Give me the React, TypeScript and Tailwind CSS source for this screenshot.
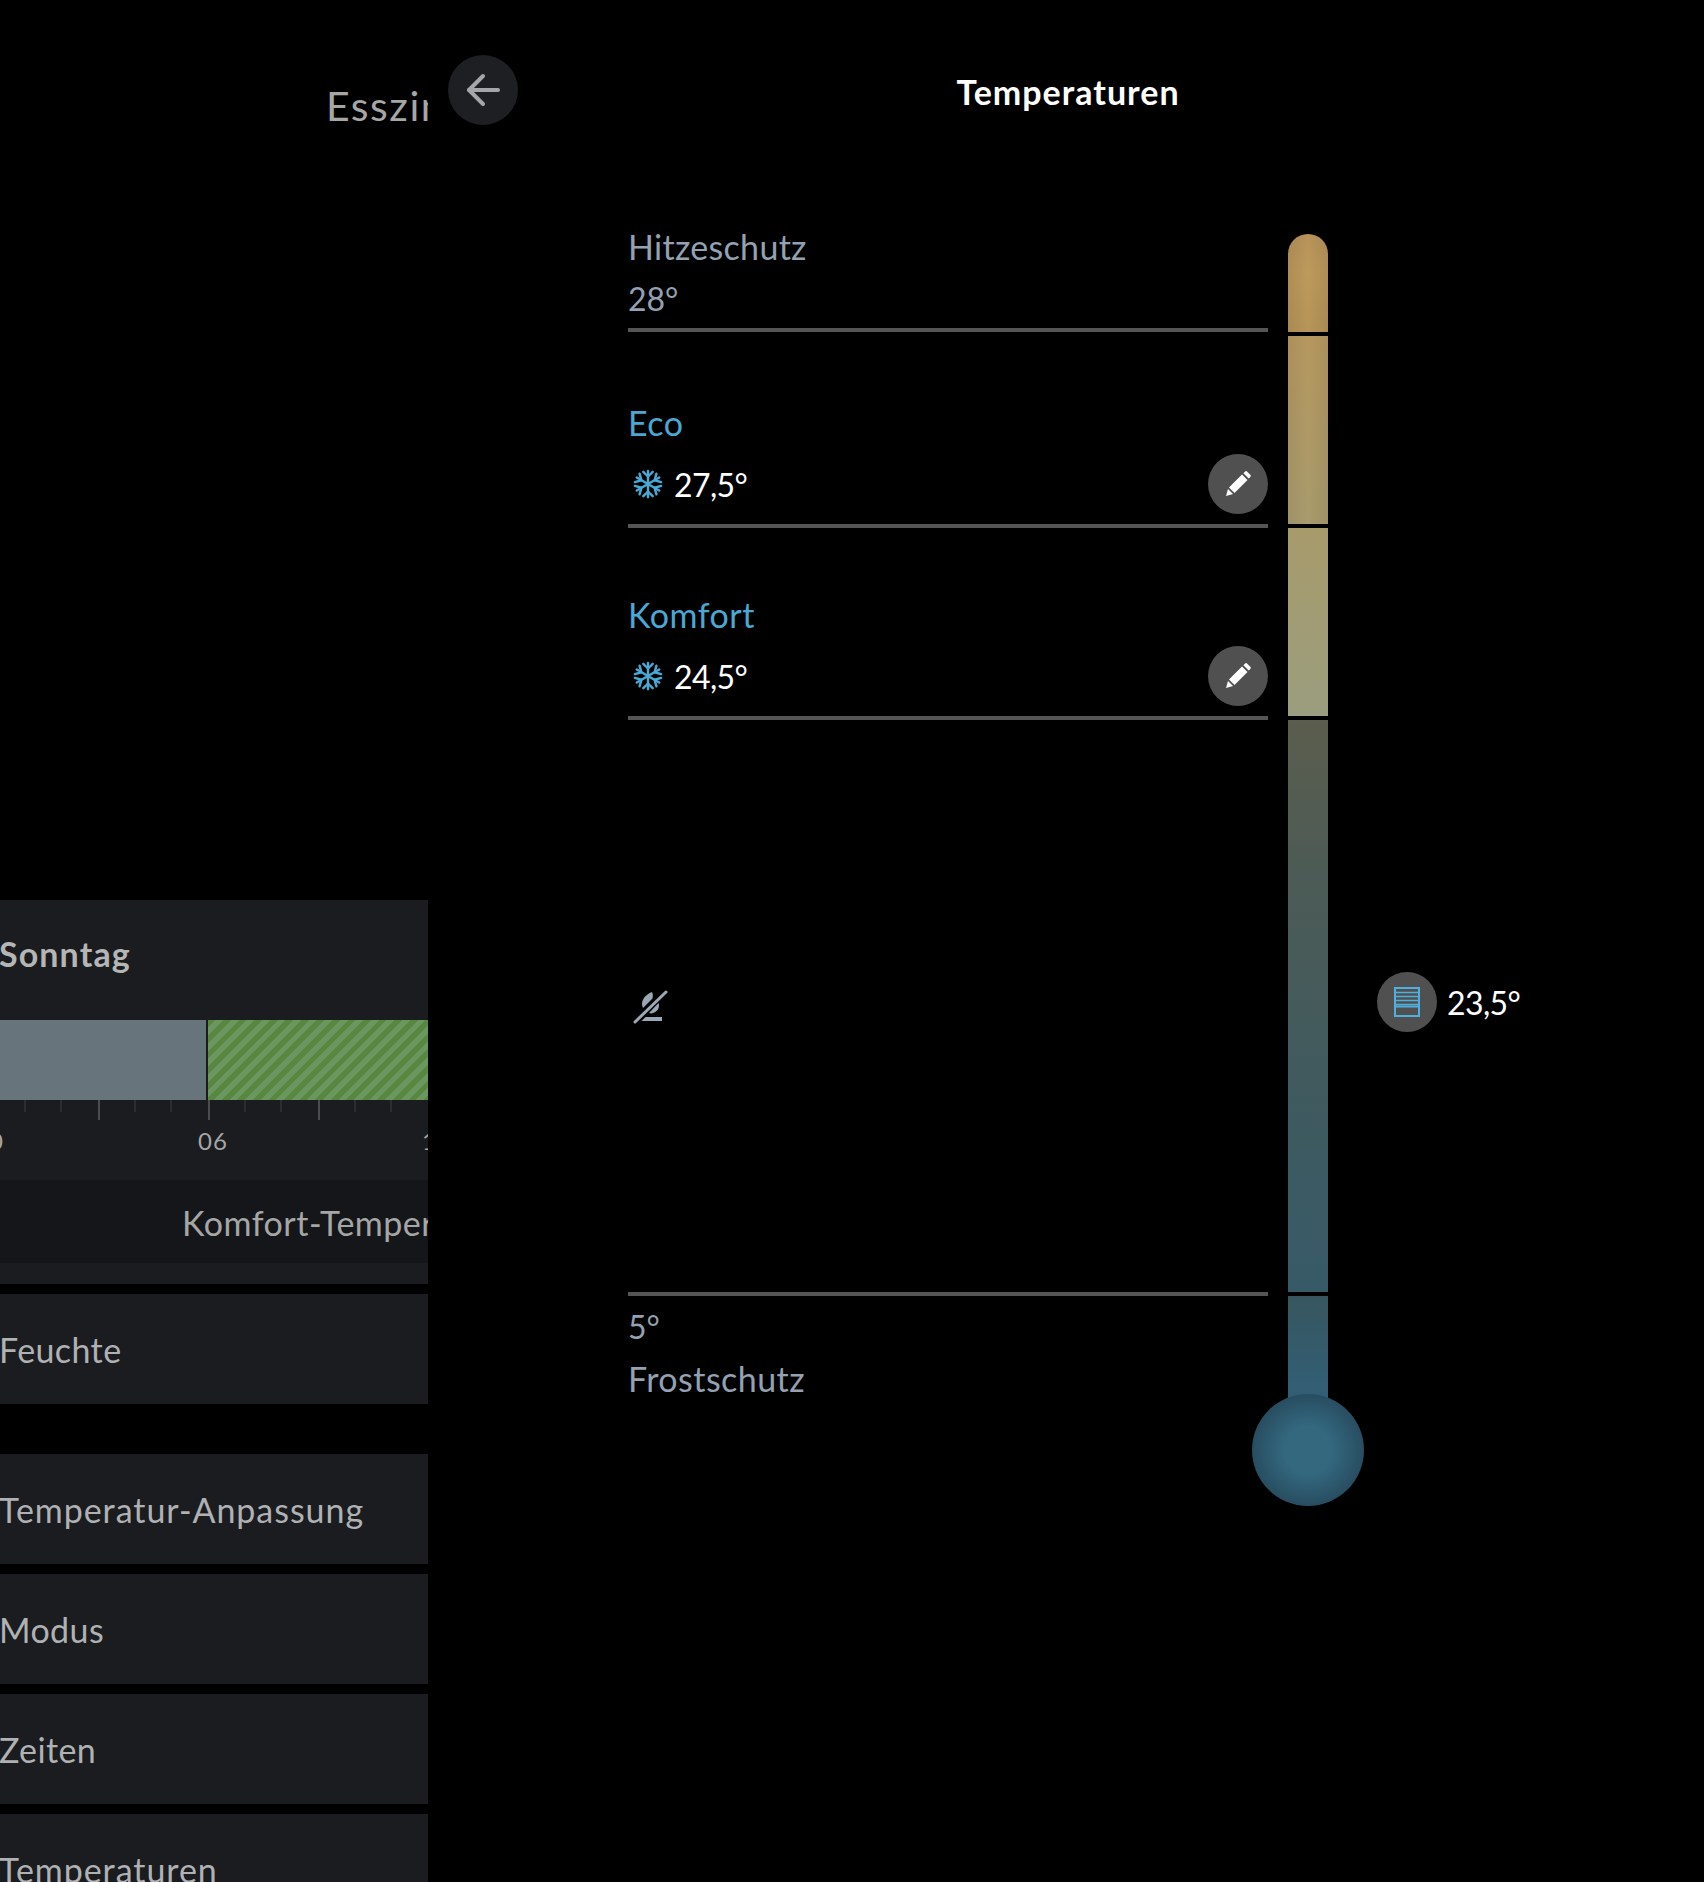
import React from 'react';

const ticks = [25, 61, 99, 135, 171, 209, 245, 281, 319, 355, 391];
const bigTicks = [99, 209, 319];

function BackArrow() {
  return (
    <svg width="34" height="34" viewBox="0 0 34 34" fill="none" stroke="#a5a6aa" strokeWidth="4" strokeLinecap="round" strokeLinejoin="round">
      <path d="M32 17H3" />
      <path d="M17 3 3 17l14 14" />
    </svg>
  );
}

function Snowflake() {
  return (
    <svg width="30" height="30" viewBox="0 0 32 32" fill="none" stroke="#4aa8d4" strokeWidth="2.600" strokeLinecap="round" strokeLinejoin="round">
      <path d="M16 2v28M4 9l24 14M28 9 4 23" />
      <path d="M11 3l5 5 5-5M11 29l5-5 5 5" />
      <path d="M2 14l7-2-2-7M30 18l-7 2 2 7M30 14l-7-2 2-7M2 18l7 2-2 7" />
    </svg>
  );
}

function Pencil() {
  return (
    <svg width="28" height="28" viewBox="0 0 28 28" fill="#fff">
      <path d="M2 26l2-7 5 5z" />
      <path d="M5 17.500 18 4.500l5.500 5.500-13 13z" />
      <path d="M19.400 3.200l1.500-1.500c.8-.8 1.600-.8 2.300 0l3.100 3.100c.7.7.7 1.500 0 2.300l-1.500 1.500z" />
    </svg>
  );
}

function EditButton() {
  return (
    <div className="w-[60px] h-[60px] rounded-full bg-[#505050] flex items-center justify-center">
      <Pencil />
    </div>
  );
}

function NoLeaf() {
  return (
    <svg width="36" height="36" viewBox="0 0 36 36" fill="#9aa7b5">
      <path d="M20 2c1 2 1 4 .5 6.500L11 18C8 12 12 5 20 2z" />
      <path d="M26.500 13c1.500 4-.5 9-7 10.500l-2.500-.5z" />
      <path d="M13.500 27H30v4H9.500z" />
      <path d="M3 32 34 2" stroke="#9aa7b5" strokeWidth="3" strokeLinecap="round" />
    </svg>
  );
}

function Blind() {
  return (
    <svg width="26" height="30" viewBox="0 0 26 30" fill="none" stroke="#4fb0e0">
      <rect x="1" y="1" width="24" height="28" strokeWidth="2" />
      <path d="M1 5.500h24M1 9.500h24M1 13.500h24M1 17.500h24" strokeWidth="1.500" />
      <path d="M1 19.500h24" strokeWidth="2" />
    </svg>
  );
}

function TempRow({ label, value, top }: { label: string; value: string; top: string }) {
  return (
    <div className={`${top} shrink-0`}>
      <div className="text-[34px] leading-[52px] tracking-[0.5px] text-[#4aa8d4]">{label}</div>
      <div className="mt-[5px] h-[60px] flex items-center justify-between">
        <div className="flex items-center pl-[5px] gap-[11px] text-white text-[32px] tracking-[-0.6px]">
          <Snowflake />
          <span className="pt-px">{value}</span>
        </div>
        <EditButton />
      </div>
      <div className="mt-[10px] h-1 bg-[#555]" />
    </div>
  );
}

function MenuCard({ label, wide }: { label: string; wide?: boolean }) {
  return (
    <div className={`h-[110px] shrink-0 bg-[#1a1c20] flex items-center text-[34px] text-[#b0b1b3] -indent-px whitespace-nowrap ${wide ? 'tracking-[0.95px]' : 'tracking-[0.4px]'}`}>
      {label}
    </div>
  );
}

export default function App() {
  return (
    <div className="w-[1704px] h-[1882px] bg-black overflow-hidden flex font-['Lato','Liberation_Sans',sans-serif]">
      <div className="w-[428px] shrink-0 overflow-hidden flex flex-col">
        <div className="shrink-0 pt-[79px] pl-[326px] text-[41px] leading-[53px] tracking-[1.5px] text-[#a6a6a6] whitespace-nowrap">Esszimmer</div>
        <div className="shrink-0 mt-[768px] h-[384px] bg-[#1a1c20] flex flex-col">
          <div className="h-[120px] pb-[14px] shrink-0 flex items-center text-[34px] tracking-[1.1px] font-bold text-[#b5b5b5] -indent-px">Sonntag</div>
          <div className="h-20 shrink-0 flex">
            <div className="w-[206px] bg-[#68747b]" />
            <div className="w-[220px] ml-[2px] bg-[repeating-linear-gradient(135deg,#59873f_0,#59873f_5.5px,#6a9660_5.5px,#6a9660_11px)]" />
          </div>
          <div className="relative h-20 shrink-0">
            <svg width="428" height="20" className="block">
              {ticks.map((x) => (
                <line
                  key={x}
                  x1={x}
                  x2={x}
                  y1={0}
                  y2={bigTicks.includes(x) ? 20 : 12}
                  stroke={bigTicks.includes(x) ? '#4a4c50' : '#3c3e42'}
                  strokeWidth={bigTicks.includes(x) ? 2 : 1}
                />
              ))}
            </svg>
            <span className="absolute left-[-26px] top-[26px] text-2xl leading-[30px] tracking-[1px] text-[#a6a6a6]">00</span>
            <span className="absolute left-[198px] top-[26px] text-2xl leading-[30px] tracking-[1px] text-[#a6a6a6]">06</span>
            <span className="absolute left-[422px] top-[26px] text-2xl leading-[30px] tracking-[1px] text-[#a6a6a6]">12</span>
          </div>
          <div className="h-[83px] shrink-0 bg-[#141619] pl-[182px] pt-px flex items-center text-[34px] tracking-[0.5px] text-[#a6a6a6] whitespace-nowrap">Komfort-Temperatur</div>
        </div>
        <div className="mt-[10px] shrink-0"><MenuCard label="Feuchte" /></div>
        <div className="mt-[50px] shrink-0"><MenuCard label="Temperatur-Anpassung" wide /></div>
        <div className="mt-[10px] shrink-0"><MenuCard label="Modus" /></div>
        <div className="mt-[10px] shrink-0"><MenuCard label="Zeiten" /></div>
        <div className="mt-[10px] shrink-0"><MenuCard label="Temperaturen" wide /></div>
      </div>

      <div className="ml-1 w-[1272px] shrink-0 flex flex-col">
        <div className="h-[221px] shrink-0 grid grid-cols-[1fr_auto_1fr] items-start">
          <div className="pl-4 pt-[55px]">
            <div className="w-[70px] h-[70px] rounded-full bg-[#1e1f22] flex items-center justify-center">
              <BackArrow />
            </div>
          </div>
          <div className="pt-[70px] text-[34px] leading-[44px] tracking-[1px] font-bold text-white">Temperaturen</div>
          <div />
        </div>

        <div className="flex pl-[196px] items-start">
          <div className="w-[640px] shrink-0 h-[1184px] flex flex-col">
            <div className="shrink-0 text-[#94a1b2] leading-[52px]">
              <div className="text-[34px] tracking-[0.3px]">Hitzeschutz</div>
              <div className="h-[55px] text-[32px]">28°</div>
              <div className="h-1 bg-[#555]" />
            </div>
            <TempRow label="Eco" value="27,5°" top="pt-[65px]" />
            <TempRow label="Komfort" value="24,5°" top="pt-[61px]" />
            <div className="flex-1 flex items-center pl-1 pt-1">
              <NoLeaf />
            </div>
            <div className="h-1 shrink-0 bg-[#555]" />
            <div className="shrink-0 mt-[5px] text-[#94a1b2] leading-[52px]">
              <div className="text-[32px]">5°</div>
              <div className="text-[34px] tracking-[0.45px]">Frostschutz</div>
            </div>
          </div>

          <div className="-ml-4 mt-[13px] w-[112px] shrink-0 flex flex-col items-center">
            <div className="w-10 h-[98px] shrink-0 rounded-t-[20px] bg-[linear-gradient(90deg,rgba(0,0,0,0.08),transparent_50%,rgba(0,0,0,0.08)),linear-gradient(180deg,#b8935a,#bd9a5c_40%,#b69558)]" />
            <div className="w-10 h-[188px] shrink-0 mt-1 bg-[linear-gradient(90deg,rgba(0,0,0,0.06),transparent_50%,rgba(0,0,0,0.06)),linear-gradient(180deg,#b6985f,#a89b6d)]" />
            <div className="w-10 h-[188px] shrink-0 mt-1 bg-[linear-gradient(180deg,#a79a6b,#9a9d7e)]" />
            <div className="w-10 h-[572px] shrink-0 mt-1 bg-[linear-gradient(180deg,#5b5d4d,#4d5b55_25%,#3e5a60_70%,#375a68)]" />
            <div className="w-10 h-[120px] shrink-0 mt-1 bg-[linear-gradient(180deg,#37565f,#31607a)]" />
            <div className="w-[112px] h-[112px] shrink-0 -mt-[22px] rounded-full bg-[radial-gradient(circle,#33687f_30%,#274a5d_75%)]" />
          </div>

          <div className="ml-[13px] mt-[751px] flex items-center gap-[10px]">
            <div className="w-[60px] h-[60px] rounded-full bg-[#505050] flex items-center justify-center">
              <Blind />
            </div>
            <span className="pt-px text-[32px] tracking-[-0.6px] text-white">23,5°</span>
          </div>
        </div>
      </div>
    </div>
  );
}
